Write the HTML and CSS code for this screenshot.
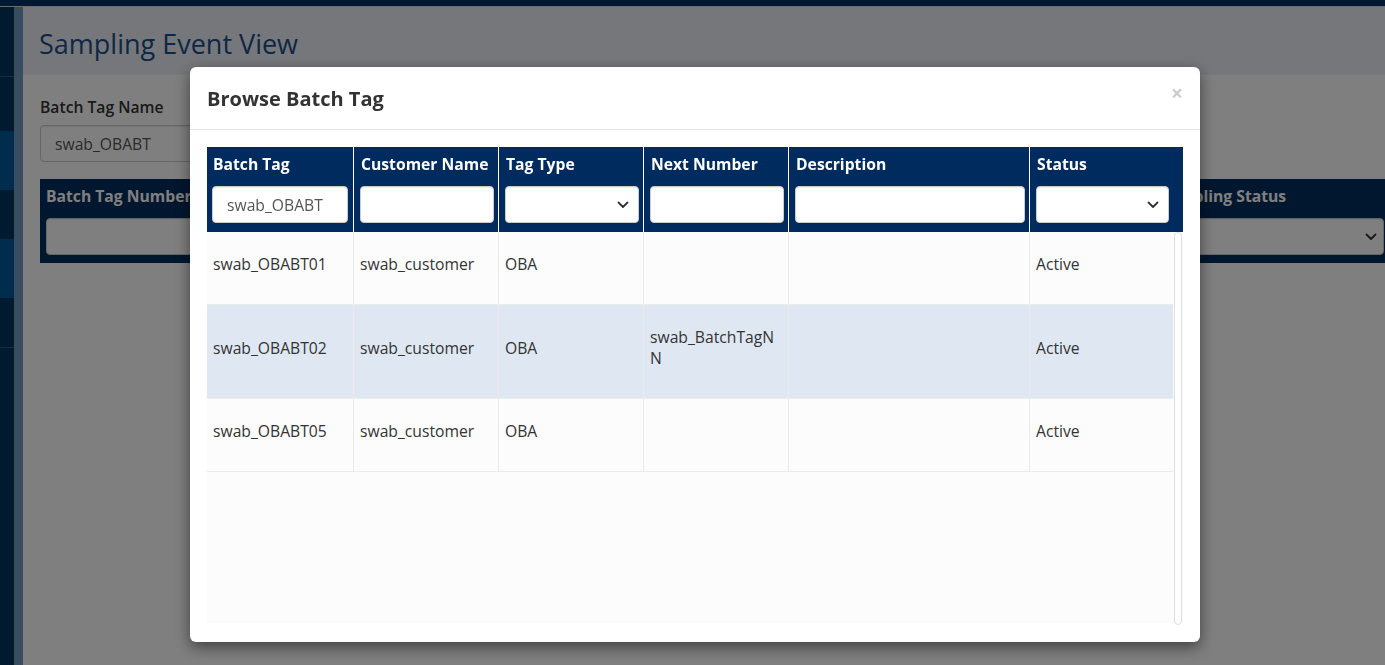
FILE: index.html
```html
<!DOCTYPE html>
<html lang="en">
<head>
<meta charset="utf-8">
<title>Sampling Event View</title>
<link rel="stylesheet" href="styles.css">
</head>
<body>
<div class="app">
  <div class="topbar"></div>
  <div class="shell">
    <nav class="sidebar">
      <div class="nav-item nav-top"></div>
      <div class="nav-item nav-dark nav-h54"></div>
      <div class="nav-item nav-light nav-h59"></div>
      <div class="nav-item nav-dark nav-h49"></div>
      <div class="nav-item nav-light nav-h59"></div>
      <div class="nav-item nav-dark nav-h49"></div>
      <div class="nav-item nav-dark nav-rest"></div>
    </nav>
    <div class="sidebar-edge"></div>
    <main class="main">
      <header class="page-header">
        <h1 class="page-title">Sampling Event View</h1>
      </header>
      <section class="page-content">
        <label class="field-label">Batch Tag Name</label>
        <div class="text-input page-input">swab_OBABT</div>
        <div class="filter-band">
          <div class="band-col">
            <div class="band-label">Batch Tag Number</div>
            <div class="select-box"></div>
          </div>
          <div class="band-col">
            <div class="band-label">Sampling Status</div>
            <div class="select-box band-select">
              <svg class="chevron" width="12" height="8" viewBox="0 0 12 8"><path d="M1.5 1.5 L6 6 L10.5 1.5" fill="none" stroke="#333" stroke-width="1.8" stroke-linecap="round" stroke-linejoin="round"/></svg>
            </div>
          </div>
        </div>
      </section>
    </main>
  </div>
</div>

<div class="backdrop"></div>

<div class="modal" role="dialog">
  <div class="modal-header">
    <h4 class="modal-title">Browse Batch Tag</h4>
    <button class="close" type="button">×</button>
  </div>
  <div class="modal-body">
    <div class="data-grid">
      <div class="grid-head">
        <div class="th">
          <div class="th-label">Batch Tag</div>
          <div class="text-input">swab_OBABT</div>
        </div>
        <div class="th">
          <div class="th-label">Customer Name</div>
          <div class="text-input"></div>
        </div>
        <div class="th">
          <div class="th-label">Tag Type</div>
          <div class="select-box">
            <svg class="chevron" width="12" height="8" viewBox="0 0 12 8"><path d="M1.5 1.5 L6 6 L10.5 1.5" fill="none" stroke="#333" stroke-width="1.8" stroke-linecap="round" stroke-linejoin="round"/></svg>
          </div>
        </div>
        <div class="th">
          <div class="th-label">Next Number</div>
          <div class="text-input"></div>
        </div>
        <div class="th">
          <div class="th-label">Description</div>
          <div class="text-input"></div>
        </div>
        <div class="th">
          <div class="th-label">Status</div>
          <div class="select-box">
            <svg class="chevron" width="12" height="8" viewBox="0 0 12 8"><path d="M1.5 1.5 L6 6 L10.5 1.5" fill="none" stroke="#333" stroke-width="1.8" stroke-linecap="round" stroke-linejoin="round"/></svg>
          </div>
        </div>
        <div class="th-gutter"></div>
      </div>
      <div class="grid-body-wrap">
        <div class="grid-body">
          <div class="row">
            <div class="td">swab_OBABT01</div>
            <div class="td">swab_customer</div>
            <div class="td">OBA</div>
            <div class="td"></div>
            <div class="td"></div>
            <div class="td">Active</div>
          </div>
          <div class="row selected">
            <div class="td">swab_OBABT02</div>
            <div class="td">swab_customer</div>
            <div class="td">OBA</div>
            <div class="td wrap">swab_BatchTagNN</div>
            <div class="td"></div>
            <div class="td">Active</div>
          </div>
          <div class="row">
            <div class="td">swab_OBABT05</div>
            <div class="td">swab_customer</div>
            <div class="td">OBA</div>
            <div class="td"></div>
            <div class="td"></div>
            <div class="td">Active</div>
          </div>
        </div>
        <div class="scroll-track"></div>
      </div>
    </div>
  </div>
</div>
</body>
</html>
```

FILE: styles.css
```css
html, body {
  margin: 0;
  padding: 0;
}

body {
  font-family: "Open Sans", "Noto Sans", sans-serif;
  overflow: hidden;
  height: 665px;
  background: #ffffff;
  color: #333333;
}

.app {
  height: 665px;
  display: flex;
  flex-direction: column;
}

.topbar {
  flex: none;
  height: 6px;
  background: #003366;
  border-bottom: 1px solid #d4d4d4;
}

.shell {
  flex: 1;
  display: flex;
  min-height: 0;
}

.sidebar {
  flex: none;
  width: 14px;
  display: flex;
  flex-direction: column;
  background: #003460;
}

.nav-item {
  flex: none;
  box-sizing: border-box;
}

.nav-top {
  height: 70px;
  border-bottom: 1px solid #2c5a85;
}

.nav-dark {
  background: #003460;
}

.nav-light {
  background: #005a98;
}

.nav-h54 { height: 54px; }
.nav-h59 { height: 59px; }
.nav-h49 { height: 49px; }

.nav-rest {
  flex: 1;
  border-top: 1px solid #2c5a85;
}

.sidebar-edge {
  flex: none;
  width: 9px;
  background: #7498c0;
}

.main {
  flex: 1;
  min-width: 0;
  overflow: hidden;
  background: #ffffff;
}

.page-header {
  background: #eceef6;
  border-bottom: 1px solid #f4f5f8;
  padding: 19px 16px 12px;
}

.page-title {
  margin: 0;
  font-size: 27px;
  line-height: 36px;
  font-weight: 400;
  color: #1c5189;
}

.page-content {
  padding: 22px 17px 0;
}

.field-label {
  display: block;
  font-size: 15.7px;
  font-weight: 600;
  line-height: 21px;
  color: #333333;
  margin-bottom: 7px;
}

.text-input {
  box-sizing: border-box;
  height: 37px;
  border: 1px solid #cccccc;
  border-radius: 4px;
  background: #ffffff;
  box-shadow: inset 0 1px 1px rgba(0, 0, 0, 0.075);
  padding: 0 14px;
  display: flex;
  align-items: center;
  font-size: 15.7px;
  color: #555555;
  white-space: nowrap;
  overflow: hidden;
}

.page-input {
  width: 300px;
}

.filter-band {
  margin-top: 17px;
  margin-right: -22px;
  background: #002e5e;
  padding: 7px 6px 8px;
  display: grid;
  grid-template-columns: 1fr 224px;
  gap: 6px;
}

.band-col {
  min-width: 0;
}

.band-label {
  color: #ffffff;
  font-weight: 700;
  font-size: 15.7px;
  line-height: 21px;
  white-space: nowrap;
  overflow: hidden;
  margin-bottom: 11px;
}

.select-box {
  box-sizing: border-box;
  height: 37px;
  border: 1px solid #cccccc;
  border-radius: 4px;
  background: #ffffff;
  box-shadow: inset 0 1px 1px rgba(0, 0, 0, 0.075);
  display: flex;
  align-items: center;
  justify-content: flex-end;
  padding-right: 9px;
}

.band-select {
  padding-right: 6px;
}

.chevron {
  display: block;
}

.backdrop {
  position: fixed;
  inset: 0;
  background: rgba(0, 0, 0, 0.5);
}

.modal {
  position: fixed;
  left: 190px;
  top: 67px;
  width: 1010px;
  height: 575px;
  background: #ffffff;
  border-radius: 6px;
  box-shadow: 0 5px 15px rgba(0, 0, 0, 0.5);
  display: flex;
  flex-direction: column;
}

.modal-header {
  padding: 15px 17px 13px;
  border-bottom: 1px solid #e5e5e5;
  display: flex;
  justify-content: space-between;
  align-items: flex-start;
}

.modal-title {
  margin: 0;
  font-size: 20px;
  font-weight: 700;
  line-height: 34px;
  color: #333333;
}

.close {
  font-family: "Open Sans", sans-serif;
  font-size: 21px;
  font-weight: 700;
  line-height: 21px;
  color: #000000;
  opacity: 0.2;
  background: none;
  border: 0;
  padding: 0;
  margin: 1px 0 0;
}

.modal-body {
  flex: 1;
  min-height: 0;
  padding: 17px 17px 19px;
}

.data-grid {
  height: 476px;
  display: flex;
  flex-direction: column;
}

.grid-head {
  flex: none;
  display: grid;
  grid-template-columns: 146px 145px 145px 145px 241px 144px 10px;
  background: #002b5e;
  height: 85px;
}

.th {
  box-sizing: border-box;
  padding: 7px 4px 9px 6px;
  border-left: 1px solid #ffffff;
  display: flex;
  flex-direction: column;
  min-width: 0;
}

.th:first-child {
  border-left: 0;
  padding: 7px 5px 9px 5px;
}

.th-gutter {
  background: #002b5e;
}

.th-label {
  color: #ffffff;
  font-weight: 700;
  font-size: 15.7px;
  line-height: 21px;
  margin: 0 0 11px 1px;
  white-space: nowrap;
}

.grid-body-wrap {
  flex: 1;
  display: flex;
  background: #fcfcfc;
  min-height: 0;
}

.grid-body {
  width: 966px;
  flex: none;
}

.row {
  display: grid;
  grid-template-columns: 146px 145px 145px 145px 241px 144px;
  border-bottom: 1px solid #ebebeb;
}

.row.selected {
  background: #dfe8f2;
}

.td {
  box-sizing: border-box;
  padding: 22px 6px 29px;
  border-left: 1px solid #ebebeb;
  font-size: 15.7px;
  line-height: 21px;
  color: #333333;
  display: flex;
  align-items: center;
  min-width: 0;
}

.td:first-child {
  border-left: 0;
}

.td.wrap {
  word-break: break-all;
}

.scroll-track {
  flex: none;
  width: 8px;
  margin-left: 1px;
  margin-bottom: -2px;
  box-sizing: border-box;
  border: 1px solid #dedede;
  border-radius: 4px;
  background: #ffffff;
}
```
